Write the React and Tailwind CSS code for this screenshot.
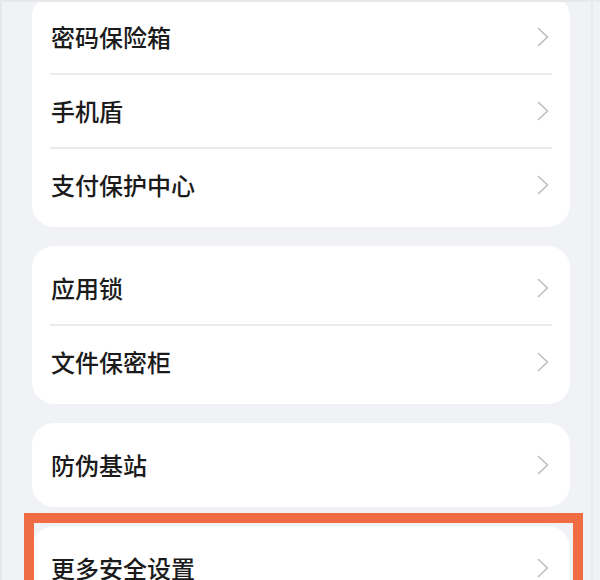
// Security settings list (phone screenshot) with a highlighted last card
import React from 'react';

const GROUPS = [
  ['密码保险箱', '手机盾', '支付保护中心'],
  ['应用锁', '文件保密柜'],
  ['防伪基站'],
  ['更多安全设置'],
];

const Chevron = () => (
  <svg width="13" height="20" viewBox="0 0 13 20" fill="none" className="shrink-0">
    <polyline points="1.5,1.5 10.5,10 1.5,18.5" stroke="#bdbdbd" strokeWidth="1.6" strokeLinecap="round" strokeLinejoin="round" />
  </svg>
);

const Row = ({ label, last }) => (
  <div>
    <div className="h-[72px] flex items-center justify-between pl-[19px] pr-[20px]">
      <span className="text-[24px] leading-none font-medium text-[#1b1b1b]">{label}</span>
      <Chevron />
    </div>
    {!last && <div className="mx-[18px] h-[2px] bg-[#ebebeb]" />}
  </div>
);

export default function App() {
  return (
    <div
      className="relative w-[600px] h-[580px] overflow-hidden bg-[#f0f2f5] border-l-[2px] border-[#e4e7eb]"
      style={{ fontFamily: '"Noto Sans CJK SC", "Noto Sans", sans-serif' }}
    >
      <div className="flex flex-col gap-[19px] mt-[-5px] ml-[30px] w-[538px]">
        {GROUPS.map((items, gi) => (
          <div key={gi} className="bg-white rounded-[22px] py-[6px]">
            {items.map((label, i) => (
              <Row key={label} label={label} last={i === items.length - 1} />
            ))}
          </div>
        ))}
      </div>

      {/* top edge and right strip */}
      <div className="absolute top-0 left-0 right-0 h-[2px] bg-[#e6e8eb]" />
      <div className="absolute top-0 bottom-0 left-[589px] w-[2px] bg-[#e6e9ed]" />

      {/* orange highlight box */}
      <div className="absolute left-[22px] top-[513px] w-[559px] h-[90px] border-[10px] border-[#f06c43]" />
    </div>
  );
}
